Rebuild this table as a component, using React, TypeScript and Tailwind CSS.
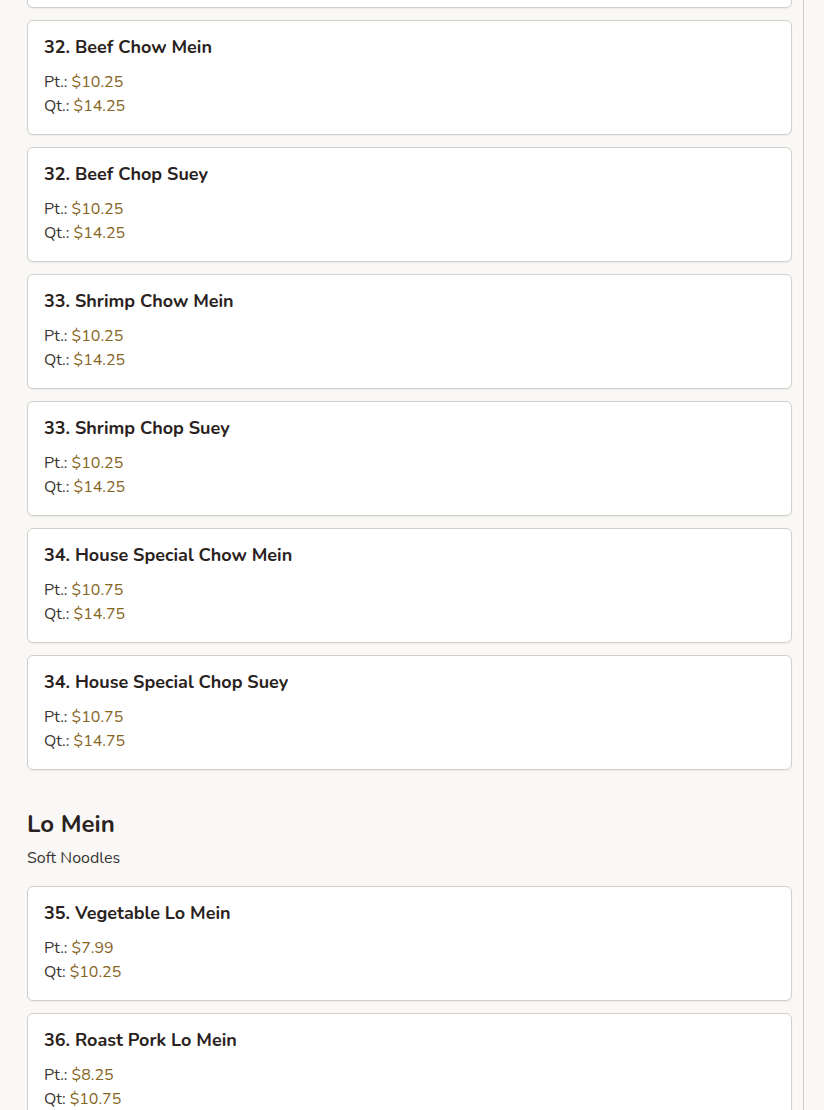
import React from "react";

type Item = { name: string; prices: [string, string][] };

const chow: Item[] = [
  { name: "32. Beef Chow Mein", prices: [["Pt.:", "$10.25"], ["Qt.:", "$14.25"]] },
  { name: "32. Beef Chop Suey", prices: [["Pt.:", "$10.25"], ["Qt.:", "$14.25"]] },
  { name: "33. Shrimp Chow Mein", prices: [["Pt.:", "$10.25"], ["Qt.:", "$14.25"]] },
  { name: "33. Shrimp Chop Suey", prices: [["Pt.:", "$10.25"], ["Qt.:", "$14.25"]] },
  { name: "34. House Special Chow Mein", prices: [["Pt.:", "$10.75"], ["Qt.:", "$14.75"]] },
  { name: "34. House Special Chop Suey", prices: [["Pt.:", "$10.75"], ["Qt.:", "$14.75"]] },
];

const lomein: Item[] = [
  { name: "35. Vegetable Lo Mein", prices: [["Pt.:", "$7.99"], ["Qt:", "$10.25"]] },
  { name: "36. Roast Pork Lo Mein", prices: [["Pt.:", "$8.25"], ["Qt:", "$10.75"]] },
];

const cardCls =
  "bg-white border border-[#d3d0cc] rounded-[6px] shadow-[0_1px_2px_rgba(0,0,0,0.06)]";

function Card({ item }: { item: Item }) {
  return (
    <div className={`${cardCls} px-4 pt-3 pb-4`}>
      <h3 className="text-[18px] leading-[28px] font-bold text-[#2a2220]">{item.name}</h3>
      <div className="mt-[9px]">
        {item.prices.map(([l, p]) => (
          <div key={l} className="text-[16px] leading-[24px] text-[#3a3634]">
            {l} <span className="text-[#86651f]">{p}</span>
          </div>
        ))}
      </div>
    </div>
  );
}

export default function App() {
  return (
    <div
      className="min-h-screen bg-[#f9f8f6] overflow-hidden"
      style={{ fontFamily: "Nunito, Lato, 'Noto Sans', sans-serif" }}
    >
      <div className="w-[804px] border-r border-[#cfcdca] pl-[27px] pr-[11px] min-h-[1110px]">
        <div className="flex flex-col gap-3 mt-[-107px]">
          <div className={`${cardCls} h-[115px]`} />
          {chow.map((it) => (
            <Card key={it.name} item={it} />
          ))}
        </div>
        <div className="mt-[38px]">
          <h2 className="text-[24px] leading-[32px] font-bold text-[#2a2220]">Lo Mein</h2>
          <p className="mt-[6px] text-[16px] leading-[24px] text-[#3a3634]">Soft Noodles</p>
        </div>
        <div className="flex flex-col gap-3 mt-4">
          {lomein.map((it) => (
            <Card key={it.name} item={it} />
          ))}
        </div>
      </div>
    </div>
  );
}
